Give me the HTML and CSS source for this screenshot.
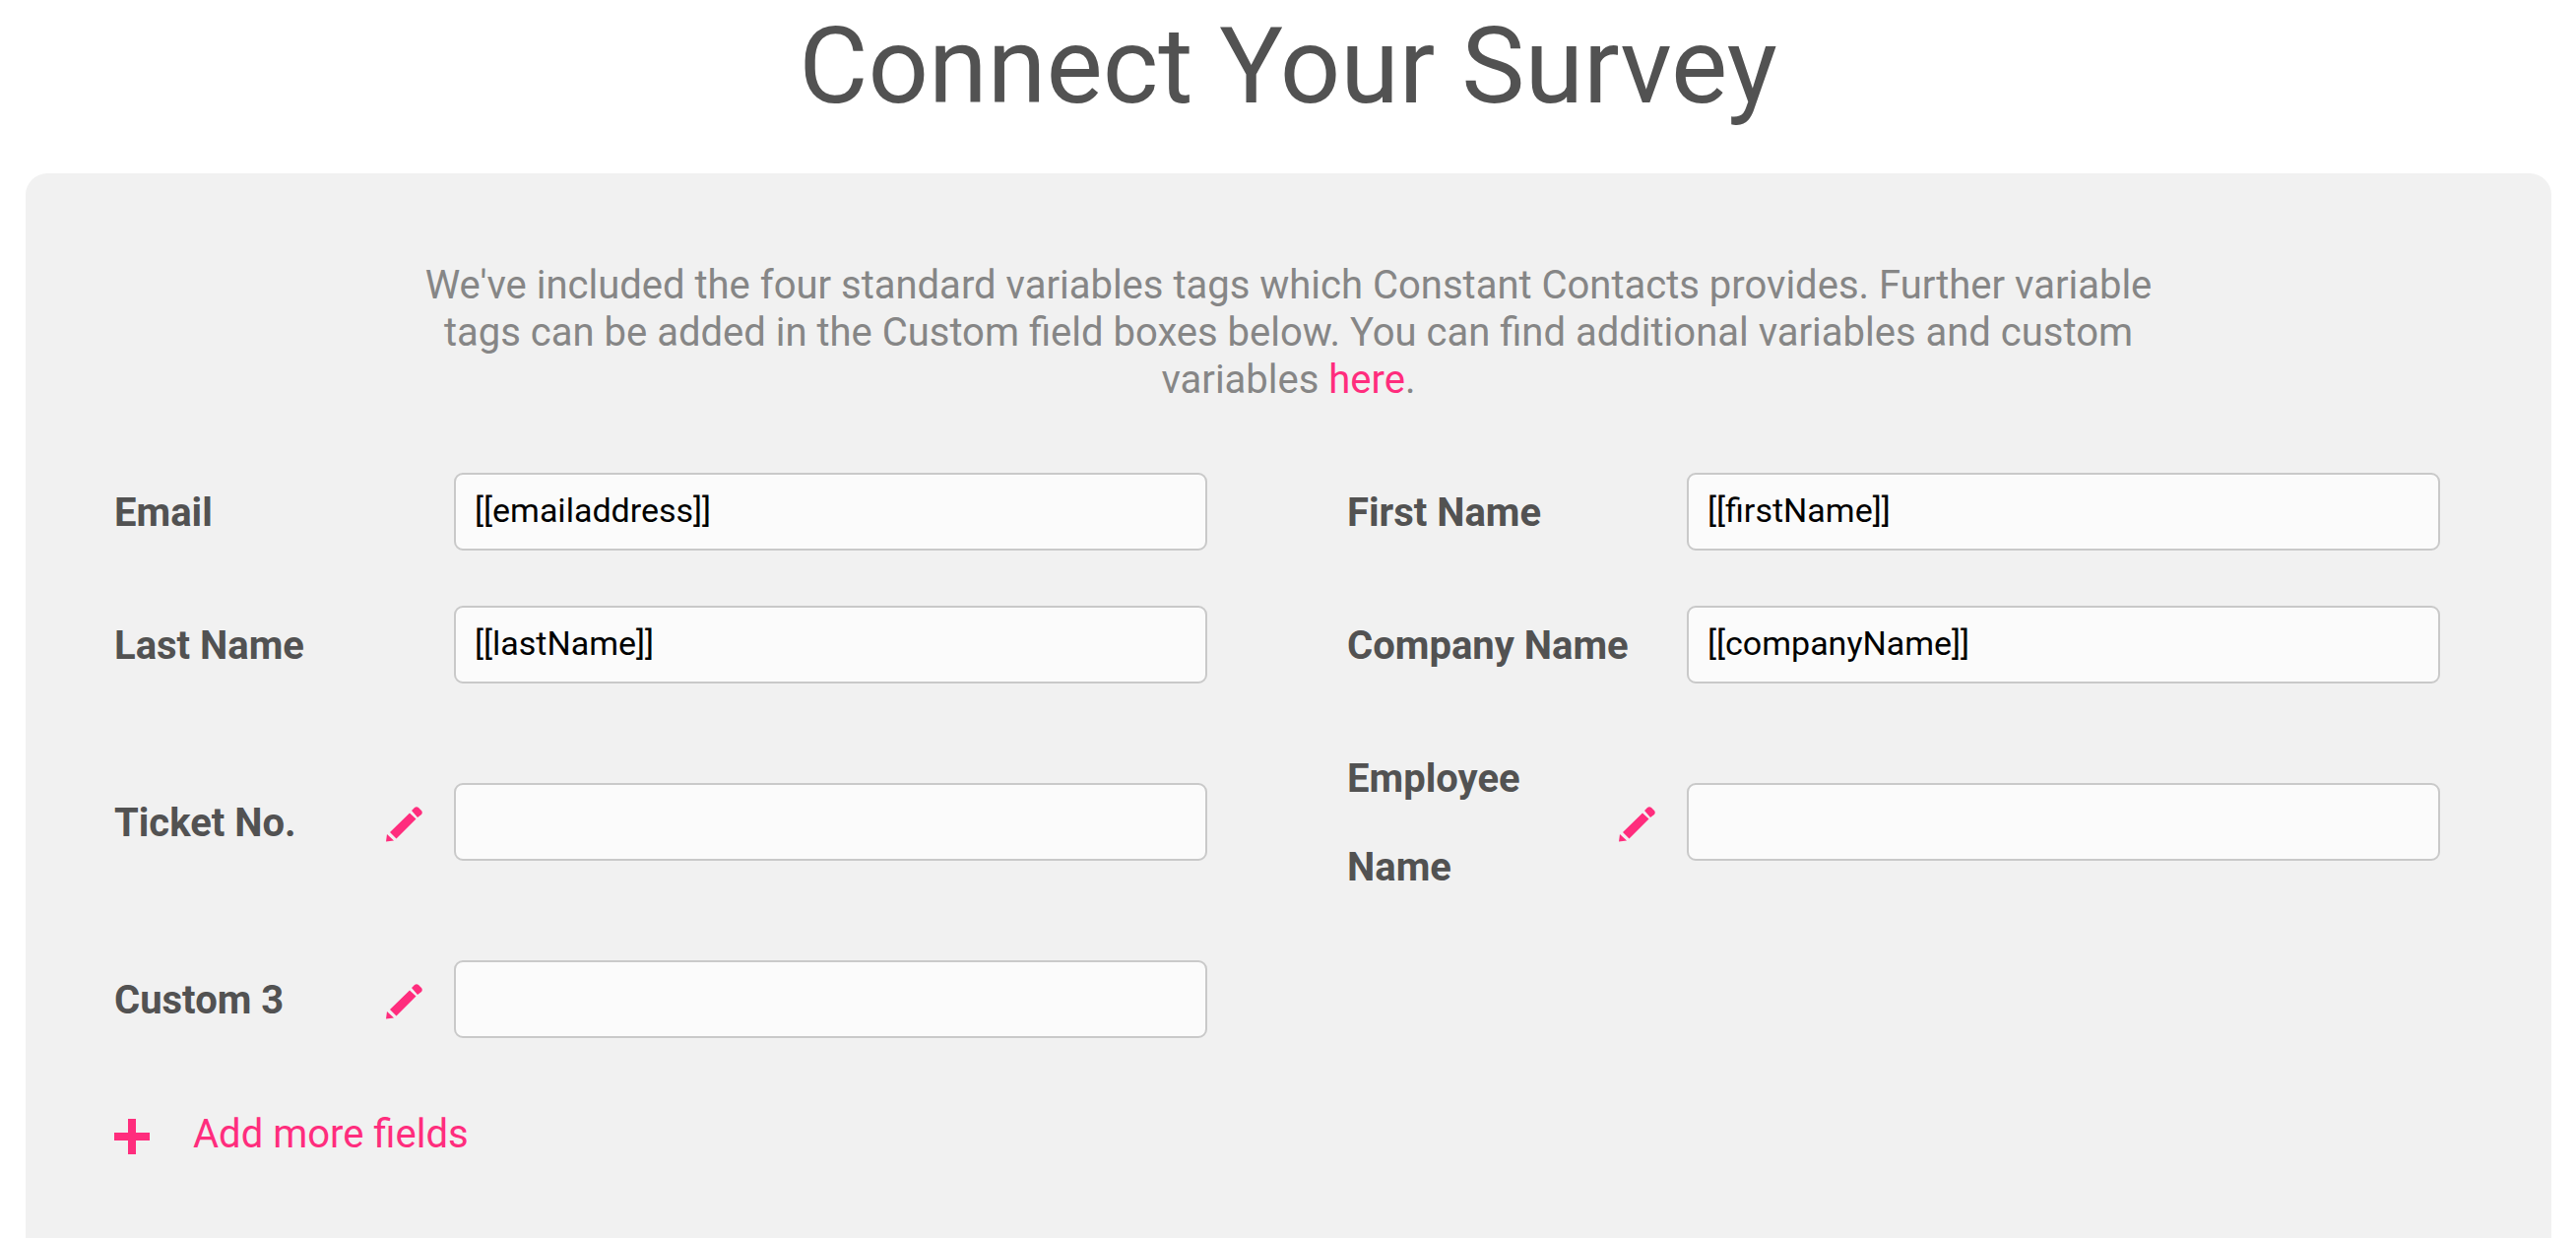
FILE: index.html
```html
<!DOCTYPE html>
<html lang="en">
<head>
<meta charset="utf-8">
<title>Connect Your Survey</title>
<link rel="stylesheet" href="styles.css">
</head>
<body>
<h1 class="title">Connect Your Survey</h1>
<main class="panel">
  <p class="intro">We've included the four standard variables tags which Constant Contacts provides. Further variable tags can be added in the Custom field boxes below. You can find additional variables and custom variables <a href="#">here</a>.</p>
  <form class="fields">
    <div class="field"><label for="email">Email</label><input id="email" type="text" value="[[emailaddress]]"></div>
    <div class="field"><label for="first">First Name</label><input id="first" type="text" value="[[firstName]]"></div>
    <div class="field"><label for="last">Last Name</label><input id="last" type="text" value="[[lastName]]"></div>
    <div class="field"><label for="company">Company Name</label><input id="company" type="text" value="[[companyName]]"></div>
    <div class="field custom"><label for="ticket">Ticket No.</label><button class="edit" type="button" aria-label="Edit Ticket No."><svg viewBox="0 0 38 38"><path d="M5 28 25 8.500l6.500 6L11.500 34.500zM27 6l3-3q2-1.500 4 0l3 3q1.500 2 0 4l-4 3zM2 30l7 6.500-8 1z"/></svg></button><input id="ticket" type="text"></div>
    <div class="field custom"><label for="employee">Employee Name</label><button class="edit" type="button" aria-label="Edit Employee Name"><svg viewBox="0 0 38 38"><path d="M5 28 25 8.500l6.500 6L11.500 34.500zM27 6l3-3q2-1.500 4 0l3 3q1.500 2 0 4l-4 3zM2 30l7 6.500-8 1z"/></svg></button><input id="employee" type="text"></div>
    <div class="field custom"><label for="custom3">Custom 3</label><button class="edit" type="button" aria-label="Edit Custom 3"><svg viewBox="0 0 38 38"><path d="M5 28 25 8.500l6.500 6L11.500 34.500zM27 6l3-3q2-1.500 4 0l3 3q1.500 2 0 4l-4 3zM2 30l7 6.500-8 1z"/></svg></button><input id="custom3" type="text"></div>
  </form>
  <button class="add" type="button"><svg viewBox="0 0 36 36"><path d="M14 0h8v14h14v8H22v14h-8V22H0v-8h14z"/></svg>Add more fields</button>
</main>
</body>
</html>
```
FILE: styles.css
```css
* { box-sizing: border-box; }
body {
  display: flex;
  flex-direction: column;
  min-height: 100vh;
  margin: 0;
  background: #fff;
  color: #525252;
  font-family: Roboto, sans-serif;
  font-size: 40px;
}
.title {
  margin: 0;
  padding: 3px 0 45px;
  font-size: 108px;
  font-weight: 400;
  line-height: 128px;
  text-align: center;
}
.panel {
  flex: 1;
  margin: 0 25px 0 26px;
  padding: 90px 90px 48px;
  border-radius: 22px 22px 0 0;
  background: #f1f1f1;
}
.intro {
  max-width: 1800px;
  margin: 0 auto 66px;
  color: #868686;
  line-height: 48px;
  text-align: center;
}
a { color: #ff2d7d; text-decoration: none; }
.fields {
  display: grid;
  grid-template-columns: 1fr 1fr;
  gap: 45px 142px;
  margin-right: 23px;
}
.field {
  display: grid;
  grid-template-columns: minmax(0, 345fr) minmax(0, 765fr);
  align-items: center;
}
.custom {
  grid-template-columns: minmax(0, 275fr) minmax(0, 70fr) minmax(0, 765fr);
}
label { font-weight: 700; line-height: 90px; }
input {
  width: 100%;
  height: 79px;
  margin: 0 0 4px;
  padding: 0 19px 2px;
  border: 2px solid #c9c9c9;
  border-radius: 9px;
  background: #fbfbfb;
  color: #000;
  font: 34px Roboto, sans-serif;
}
button {
  padding: 0;
  border: 0;
  background: none;
  color: #ff2d7d;
  font: inherit;
  cursor: pointer;
}
svg { display: block; fill: currentColor; }
.edit { justify-self: start; }
.edit svg { width: 38px; height: 38px; }
.add {
  display: flex;
  align-items: center;
  gap: 44px;
  height: 90px;
  margin-top: 45px;
}
.add svg { width: 36px; height: 36px; margin-top: 6px; }
```
